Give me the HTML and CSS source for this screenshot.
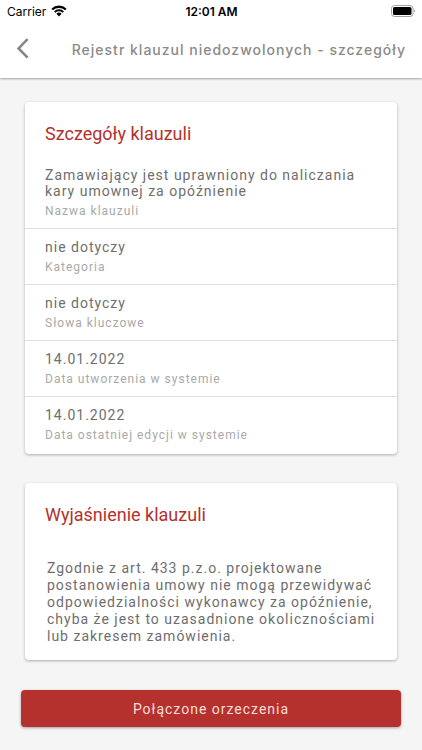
FILE: index.html
```html
<!DOCTYPE html>
<html lang="pl">
<head>
<meta charset="utf-8">
<meta name="viewport" content="width=device-width, initial-scale=1">
<title>Rejestr klauzul niedozwolonych - szczegóły</title>
<link rel="stylesheet" href="styles.css">
</head>
<body>
<header class="top">
  <div class="status">
    <div class="carrier">
      <span>Carrier</span>
      <svg width="16" height="12" viewBox="0 0 16 12" aria-hidden="true">
        <path d="M1.2 4.5a9.8 9.8 0 0 1 13.6 0" fill="none" stroke="#000" stroke-width="2.3"/>
        <path d="M3.7 7.1a6.2 6.2 0 0 1 8.6 0" fill="none" stroke="#000" stroke-width="2"/>
        <path d="M8 11.4 5.4 8.8a3.7 3.7 0 0 1 5.2 0z"/>
      </svg>
    </div>
    <span class="clock">12:01 AM</span>
    <svg class="battery" width="25" height="12" viewBox="0 0 25 12" aria-hidden="true">
      <rect x=".5" y=".5" width="21.5" height="11" rx="3" fill="none" stroke="#a0a0a0"/>
      <rect x="2" y="2" width="18.5" height="8" rx="1.6"/>
      <path d="M23.3 4.2v3.4c1.2-.5 1.2-2.9 0-3.4z" fill="#999"/>
    </svg>
  </div>
  <nav class="bar">
    <button class="back" type="button" aria-label="Wstecz">
      <svg width="14" height="22" viewBox="0 0 14 22" aria-hidden="true">
        <path d="M12.6 1.2 3.6 10.4l9 9.2" fill="none" stroke="#868686" stroke-width="2.6"/>
      </svg>
    </button>
    <h1 class="bar-title">Rejestr klauzul niedozwolonych - szczegóły</h1>
  </nav>
</header>
<main class="content">
  <section class="card">
    <h2 class="card-title">Szczegóły klauzuli</h2>
    <dl class="details">
      <div class="row"><dd>Zamawiający jest uprawniony do naliczania kary umownej za opóźnienie</dd><dt>Nazwa klauzuli</dt></div>
      <div class="row"><dd>nie dotyczy</dd><dt>Kategoria</dt></div>
      <div class="row"><dd>nie dotyczy</dd><dt>Słowa kluczowe</dt></div>
      <div class="row"><dd>14.01.2022</dd><dt>Data utworzenia w systemie</dt></div>
      <div class="row"><dd>14.01.2022</dd><dt>Data ostatniej edycji w systemie</dt></div>
    </dl>
  </section>
  <section class="card">
    <h2 class="card-title">Wyjaśnienie klauzuli</h2>
    <p class="explanation">Zgodnie z art. 433 p.z.o. projektowane postanowienia umowy nie mogą przewidywać odpowiedzialności wykonawcy za opóźnienie, chyba że jest to uzasadnione okolicznościami lub zakresem zamówienia.</p>
  </section>
  <button class="action" type="button">Połączone orzeczenia</button>
</main>
</body>
</html>
```
FILE: styles.css
```css
* {
  box-sizing: border-box;
  margin: 0;
  padding: 0;
}

body {
  background: #f5f5f5;
  color: #6e6e6e;
  font-family: Roboto, "Liberation Sans", sans-serif;
  font-size: 14px;
}

.top {
  background: #fff;
  box-shadow: 0 1px 2px rgba(0, 0, 0, 0.35);
}

.status {
  display: grid;
  grid-template-columns: 1fr auto 1fr;
  align-items: center;
  height: 22px;
  padding: 0 6px 0 7px;
  color: #000;
  font-family: Inter, sans-serif;
  font-size: 12px;
}

.carrier {
  display: flex;
  align-items: center;
  gap: 5px;
}

.clock {
  font-weight: 600;
}

.battery {
  justify-self: end;
}

.bar {
  display: flex;
  align-items: center;
  height: 56px;
  padding: 0 16px 2px 8px;
}

.back {
  display: flex;
  align-items: center;
  width: 40px;
  height: 40px;
  padding-left: 7px;
  border: 0;
  background: none;
}

.bar-title {
  flex: 1;
  color: #8a8a8a;
  font-family: Inter, sans-serif;
  font-size: 14px;
  font-weight: 500;
  letter-spacing: 1px;
  text-align: right;
  white-space: nowrap;
}

.content {
  padding: 24px 21px 22px;
}

.card {
  margin: 0 4px 29px;
  border-radius: 4px;
  background: #fff;
  box-shadow: 0 1px 3px rgba(0, 0, 0, 0.3);
}

.card-title {
  padding: 20px 20px 0;
  color: #b3312d;
  font-size: 18px;
  font-weight: 400;
  line-height: 24px;
}

.details {
  padding: 11px 0 2px;
}

.row {
  padding: 10px 20px 9px;
}

.row + .row {
  border-top: 1px solid #dedede;
}

.row dd {
  font-size: 14px;
  line-height: 16px;
  letter-spacing: 1px;
}

.row dt {
  margin-top: 4px;
  color: #a9a9a9;
  font-size: 12px;
  line-height: 16px;
  letter-spacing: 1px;
}

.explanation {
  padding: 33px 12px 15px 22px;
  line-height: 17px;
  letter-spacing: 1px;
}

.action {
  display: block;
  width: 100%;
  height: 37px;
  margin-top: 30px;
  border: 0;
  border-radius: 4px;
  background: #b5312d;
  box-shadow: 0 1px 3px rgba(0, 0, 0, 0.35);
  color: #fbdcda;
  font: 400 14px Roboto, sans-serif;
  letter-spacing: 1px;
}
```
